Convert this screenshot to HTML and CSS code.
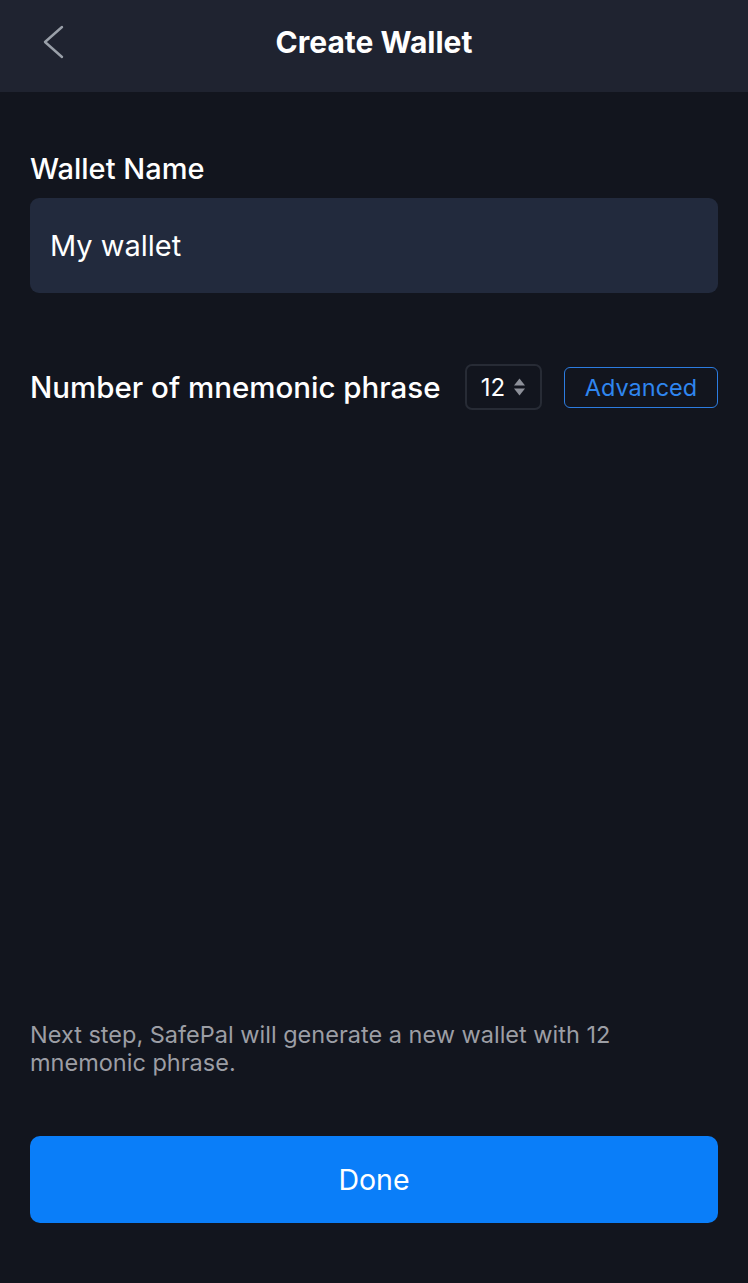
FILE: index.html
```html
<!DOCTYPE html>
<html>
<head>
  <title>Create Wallet</title>
  <link rel="stylesheet" href="styles.css">
</head>
<body>

<div class="page">
  <div class="header">
    <button class="back-btn" aria-label="Back">
      <svg width="24" height="36" viewBox="0 0 24 36">
        <path d="M20 3 L3 18 L20 33" fill="none" stroke="#9aa0a9" stroke-width="2.4" stroke-linecap="round" stroke-linejoin="round"/>
      </svg>
    </button>
    <h1>Create Wallet</h1>
  </div>

  <div class="content">
    <label class="field-label">Wallet Name</label>
    <div class="name-input">My wallet</div>

    <div class="phrase-row">
      <span class="phrase-label">Number of mnemonic phrase</span>
      <div class="stepper">
        <span>12</span>
        <svg width="13" height="20" viewBox="0 0 13 20">
          <path d="M6.5 1.5 L12 8.5 L1 8.5 Z" fill="#8d9099"/>
          <path d="M6.5 18.5 L12 11.5 L1 11.5 Z" fill="#8d9099"/>
        </svg>
      </div>
      <button class="advanced-btn">Advanced</button>
    </div>
  </div>

  <div class="footer">
    <p class="hint">Next step, SafePal will generate a new wallet with 12 mnemonic phrase.</p>
    <button class="done-btn">Done</button>
  </div>
</div>

</body>
</html>
```

FILE: styles.css
```css
body {
  margin: 0;
  background: #12151e;
  color: white;
  font-family: Inter, "Noto Sans", sans-serif;
}

.page {
  display: flex;
  flex-direction: column;
  min-height: 1283px;
}

.header {
  height: 92px;
  box-sizing: border-box;
  padding-bottom: 8px;
  background: #1f2330;
  display: flex;
  align-items: center;
  justify-content: center;
  position: relative;
}

.header h1 {
  margin: 0;
  font-size: 30px;
  font-weight: 700;
}

.back-btn {
  position: absolute;
  left: 42px;
  top: 24px;
  background: none;
  border: none;
  padding: 0;
  cursor: pointer;
}

.content {
  flex: 1;
  padding: 0 30px;
}

.field-label {
  display: block;
  margin-top: 59px;
  font-size: 29px;
  font-weight: 500;
}

.name-input {
  margin-top: 12px;
  height: 95px;
  background: #222a3d;
  border-radius: 9px;
  padding: 0 20px;
  display: flex;
  align-items: center;
  font-size: 29px;
}

.phrase-row {
  margin-top: 71px;
  display: flex;
  align-items: center;
}

.phrase-label {
  font-size: 29.5px;
  font-weight: 500;
  flex: 1;
}

.stepper {
  width: 77px;
  height: 46px;
  box-sizing: border-box;
  border: 2px solid #272b35;
  border-radius: 7px;
  display: flex;
  align-items: center;
  justify-content: center;
  gap: 8px;
  font-size: 24px;
}

.advanced-btn {
  margin-left: 22px;
  width: 154px;
  height: 41px;
  background: none;
  border: 1.5px solid #2c7ce0;
  border-radius: 6px;
  color: #2f86ef;
  font-family: inherit;
  font-size: 23.5px;
  cursor: pointer;
}

.footer {
  padding: 0 30px 60px;
}

.hint {
  margin: 0 0 59px;
  font-size: 23.5px;
  line-height: 28px;
  color: #9c9ea5;
  max-width: 620px;
}

.done-btn {
  width: 100%;
  height: 87px;
  background: #0a7ef9;
  border: none;
  border-radius: 10px;
  color: white;
  font-family: inherit;
  font-size: 28.5px;
  cursor: pointer;
}
```
